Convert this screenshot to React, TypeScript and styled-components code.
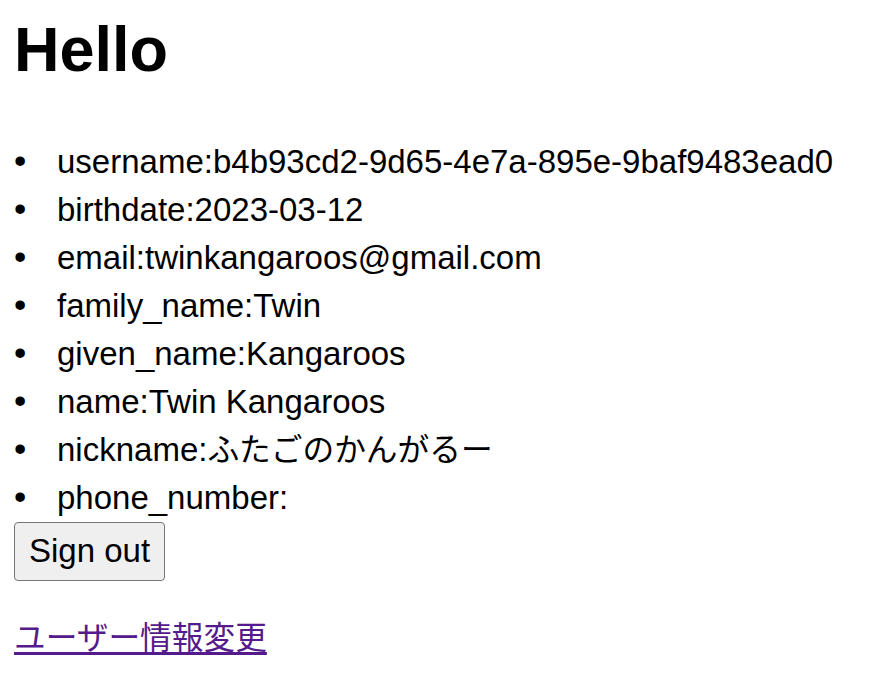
import React from "react";
import styled, { createGlobalStyle } from "styled-components";

const GlobalStyle = createGlobalStyle`
  html, body {
    margin: 0;
    padding: 0;
    background: #ffffff;
  }
  body {
    font-family: "Liberation Sans", "Noto Sans CJK JP", Arial, sans-serif;
    color: #000000;
  }
`;

const Page = styled.div`
  padding: 0 14px;
`;

const Title = styled.h1`
  font-size: 63px;
  font-weight: 700;
  line-height: 72px;
  margin: 13px 0 0;
`;

const AttrList = styled.ul`
  list-style: none;
  margin: 53px 0 0;
  padding: 0;
`;

const AttrItem = styled.li`
  font-size: 33px;
  line-height: 48px;

  &::before {
    content: "•";
    display: inline-block;
    width: 43px;
    font-size: 35px;
    line-height: 1;
  }
`;

const Ja = styled.span`
  font-family: "Noto Sans CJK JP", sans-serif;
  font-size: 31.7px;
  line-height: 1;
`;

const SignOutButton = styled.button`
  display: block;
  font-family: "Liberation Sans", Arial, sans-serif;
  font-size: 33px;
  line-height: 38px;
  color: #000000;
  background: #efefef;
  border: 1px solid #767676;
  border-radius: 4px;
  padding: 9px 14px 10px;
  margin: 0;
`;

const LinkRow = styled.p`
  margin: 33px 0 0;
  font-size: 33px;
  line-height: 48px;
`;

const UserLink = styled.a`
  color: #551a8b;
  text-decoration: underline;
  text-underline-offset: 3px;
  text-decoration-thickness: 3px;
  font-family: "Noto Sans CJK JP", sans-serif;
  font-size: 31.7px;
  line-height: 1;
`;

const attributes: { key: string; value: React.ReactNode }[] = [
  { key: "username", value: "b4b93cd2-9d65-4e7a-895e-9baf9483ead0" },
  { key: "birthdate", value: "2023-03-12" },
  { key: "email", value: "twinkangaroos@gmail.com" },
  { key: "family_name", value: "Twin" },
  { key: "given_name", value: "Kangaroos" },
  { key: "name", value: "Twin Kangaroos" },
  { key: "nickname", value: <Ja>ふたごのかんがるー</Ja> },
  { key: "phone_number", value: "" },
];

export default function App() {
  return (
    <Page>
      <GlobalStyle />
      <Title>Hello</Title>
      <AttrList>
        {attributes.map((attr) => (
          <AttrItem key={attr.key}>
            {attr.key}:{attr.value}
          </AttrItem>
        ))}
      </AttrList>
      <SignOutButton>Sign out</SignOutButton>
      <LinkRow>
        <UserLink href="#">ユーザー情報変更</UserLink>
      </LinkRow>
    </Page>
  );
}
